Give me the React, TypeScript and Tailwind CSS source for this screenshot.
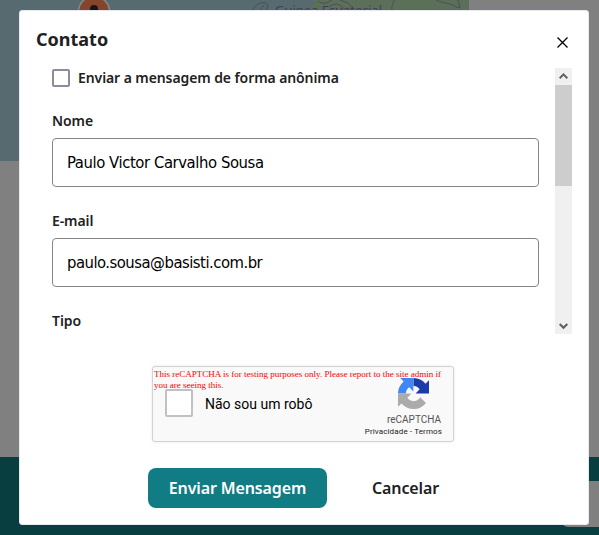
import type { ReactNode } from "react";

function Backdrop() {
  return (
    <div className="absolute inset-0 flex flex-col bg-[#808080]">
      <svg className="h-[161px] w-[469px] flex-none" viewBox="0 0 469 161">
        <rect width="469" height="161" fill="#566a6f" />
        <path d="M316 0H469V161H306V11L311 8Z" fill="#5b6f59" />
        <circle cx="94" cy="12" r="16.5" fill="#858585" />
        <circle cx="94" cy="12" r="14.8" fill="#85452a" />
        <circle cx="94" cy="9" r="4" fill="#151515" />
        <path
          d="M253 10C255 5 261 1 266 3C269 5 268 9 264 11M260 10L264 5M318 1C322 5 328 3 332 0M329 7C333 3 340 3 344 9M340 0L348 3L353 8M392 11C391 5 394 3 394 0M436 0C444 4 449 2 456 7L460 8L458 0"
          fill="none"
          stroke="#4d4e5b"
        />
        <text x="275" y="15" fontFamily="Noto Sans, sans-serif" fontSize="13" textLength="107" fill="#483c52">
          Guinea Ecuatorial
        </text>
      </svg>
      <div className="mt-[296px] flex h-[78px] flex-none justify-end bg-[#093e41] pt-6">
        <div className="h-[46px] w-[37px] rounded-bl-[6px] bg-[#808080]" />
      </div>
    </div>
  );
}

function Field({ label, children }: { label: string; children: ReactNode }) {
  return (
    <div className="h-[100px]">
      <div className="h-[27px] text-[14px] leading-5 font-semibold tracking-[-0.09px]">{label}</div>
      <div className="flex h-[49px] w-[487px] items-center rounded-[4px] border border-[#858585] pt-px pl-[14px] font-['DejaVu_Sans_Condensed','DejaVu_Sans',sans-serif] text-[16.5px] text-black">
        {children}
      </div>
    </div>
  );
}

function Scrollbar() {
  return (
    <div className="flex h-[266px] w-[17px] flex-col bg-[#f0f0f0]">
      <svg className="h-[17px] w-[17px]" viewBox="0 0 17 17">
        <path d="M4.7 10.2L8.5 6.4L12.3 10.2" fill="none" stroke="#606060" strokeWidth="2" />
      </svg>
      <div className="h-[101px] bg-[#cdcdcd]" />
      <svg className="mt-auto h-[17px] w-[17px]" viewBox="0 0 17 17">
        <path d="M4.7 7L8.5 10.8L12.3 7" fill="none" stroke="#606060" strokeWidth="2" />
      </svg>
    </div>
  );
}

function RecaptchaLogo() {
  return (
    <svg className="h-[31px] w-[31px]" viewBox="0 0 64 64">
      <path d="M64 32l-.03-1.37V4.54l-7.21 7.21C50.86 4.53 41.89 0 31.86 0v16.21c.48 0 .85.06 1.12.16 4.92.39 9.18 3.1 11.69 7.04l-8.37 8.37L64 32" fill="#1c3aa9" />
      <path d="M31.86 0L30.49.03H4.54l7.21 7.21C4.53 13.14 0 22.11 0 32.14h16.05c0-.48.06-.85.16-1.12.39-4.92 3.1-9.18 7.04-11.69l8.37 8.37L31.86 0" fill="#4285f4" />
      <path d="M0 32.14l.03 1.37V59.6l7.21-7.21C13.14 59.61 22.11 64 32.14 64c10.44 0 19.71-4.93 25.58-12.56L45.9 39.49a15.7 15.7 0 0 1-4.79 5.37c-2.07 1.61-5 2.93-8.97 2.93-.48 0-.85-.06-1.12-.16-4.92-.39-9.18-3.1-11.69-7.04l8.37-8.37L0 32.14" fill="#ababab" />
    </svg>
  );
}

function Recaptcha() {
  return (
    <div className="relative ml-[132px] h-[76px] w-[302px] rounded-[3px] border border-[#d3d3d3] bg-[#f9f9f9] font-[Roboto,sans-serif] shadow-[0_0_3px_rgba(0,0,0,0.1)]">
      <div className="flex h-full">
        <div className="mt-[22px] ml-3 h-7 w-7 rounded-[2px] border-2 border-[#c1c1c1] bg-white" />
        <div className="mt-[27px] ml-3 w-[160px] text-[14px] leading-5 text-black">Não sou um robô</div>
        <div className="flex w-[88px] flex-col items-end pt-[11px] text-[#555555]">
          <div className="mr-[24px]">
            <RecaptchaLogo />
          </div>
          <div className="mt-[6px] mr-[12px] text-[10px] leading-[10px]">reCAPTCHA</div>
          <div className="mt-[2px] mr-[11px] text-[8px] leading-[9px] tracking-[0.13px] whitespace-nowrap text-[#222222]">
            Privacidade - Termos
          </div>
        </div>
      </div>
      <div className="absolute top-[2px] left-px font-['Liberation_Serif',serif] text-[9px] leading-[11px] whitespace-nowrap text-[#ff0000]">
        This reCAPTCHA is for testing purposes only. Please report to the site admin if
        <br />
        you are seeing this.
      </div>
    </div>
  );
}

export default function App() {
  return (
    <div className="relative h-[535px] w-[599px] overflow-hidden font-['Noto_Sans',sans-serif] text-[#212121]">
      <Backdrop />
      <div className="relative mt-[10px] ml-[19px] flex h-[515px] w-[570px] flex-col rounded-[3px] border border-[#e5eaf0] bg-white">
        <div className="flex h-[57px] justify-between pr-5 pl-4">
          <h1 className="mt-[14px] text-[18px] leading-7 font-bold">Contato</h1>
          <svg className="mt-[26px] h-[11px] w-[11px]" viewBox="0 0 11 11">
            <path d="M.5.5l10 10M10.5.5l-10 10" stroke="#000" strokeWidth="1.3" />
          </svg>
        </div>
        <div className="flex h-[266px] justify-between pr-4 pl-8">
          <div className="flex flex-col overflow-hidden">
            <div className="flex h-[43px] gap-2 text-[14px] leading-5 font-semibold tracking-[-0.09px]">
              <div className="mt-px h-[18px] w-[18px] rounded-[2px] border-2 border-[#8f8b9b]" />
              Enviar a mensagem de forma anônima
            </div>
            <Field label="Nome"><span className="tracking-[-0.42px]">Paulo Victor Carvalho Sousa</span></Field>
            <Field label="E-mail"><span className="tracking-[-0.5px]">paulo.sousa@basisti.com.br</span></Field>
            <div className="text-[14px] leading-5 font-semibold tracking-[-0.09px]">Tipo</div>
          </div>
          <Scrollbar />
        </div>
        <div className="mt-8 h-[76px]">
          <Recaptcha />
        </div>
        <div className="mt-[26px] ml-32 flex items-center text-[16px] font-semibold tracking-[-0.13px]">
          <button className="h-10 w-[179px] rounded-lg bg-[#127c84] text-white">Enviar Mensagem</button>
          <button className="ml-[45px]">Cancelar</button>
        </div>
      </div>
    </div>
  );
}
